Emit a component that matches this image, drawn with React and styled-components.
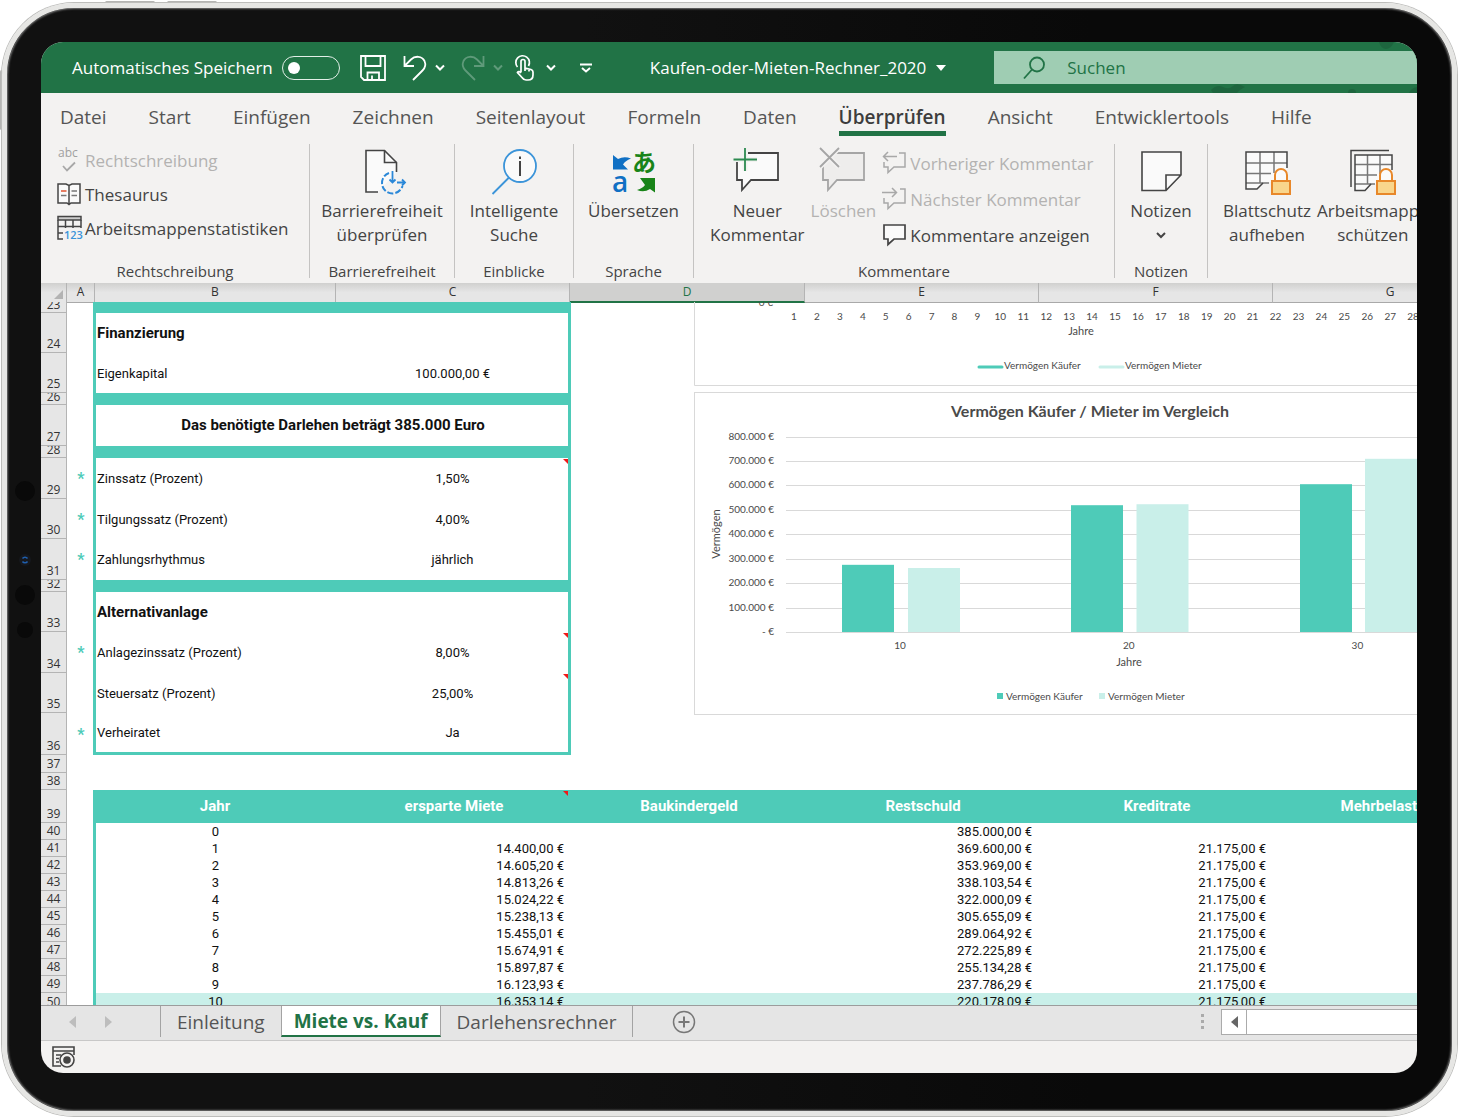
import React from "react";
import styled, { createGlobalStyle, css } from "styled-components";

const teal = "#4ecbb8";
const mint = "#c9efe9";
const green = "#217346";
const ui = '"Open Sans", "Noto Sans", sans-serif';

const GlobalStyle = createGlobalStyle`
  *, *::before, *::after { box-sizing: border-box; }
  body { margin: 0; background: #fff; font-family: ${ui}; color: #444; }
  button, input { font: inherit; color: inherit; }
  button { padding: 0; border: 0; background: none; cursor: pointer; }
  svg { display: block; flex: none; }
`;

/* ---------- device ---------- */

const Stage = styled.div`
  position: relative;
  padding: 3px 1px 1px 2px;
  overflow: hidden;
`;

const Device = styled.div`
  position: relative;
  padding: 34px 35px 38px 34px;
  border: 5px solid #e6e6e4;
  border-radius: 72px;
  background: linear-gradient(90deg, #111 0%, #111 40%, #090909 75%);
  box-shadow: inset 0 0 2px 1px #777, 0 0 0 1px #bdbdbb;
`;

const SideKey = styled.span`
  position: absolute;
  background: #b5b5b3;
  border-radius: 2px;
  ${(p) =>
    p.$edge === "top"
      ? css`top: 1px; left: ${p.$at}px; width: 50px; height: 3px;`
      : css`left: 0; top: ${p.$at}px; width: 3px; height: 60px;`}
`;

const Sensors = styled.svg`
  position: absolute;
  left: 8px;
  top: 472px;
`;

const Screen = styled.div`
  overflow: hidden;
  border-radius: 22px;
  background: #f3f2f1;
`;

/* ---------- title bar ---------- */

const TitleBar = styled.header`
  position: relative;
  display: flex;
  align-items: center;
  height: 51px;
  padding-left: 31px;
  background: ${green};
  color: #fff;
  font-size: 17px;
  line-height: 24px;
  white-space: nowrap;
`;

const AutoSave = styled.label`
  display: flex;
  align-items: center;
  gap: 9px;
  margin-right: 20px;
`;

const Toggle = styled.input`
  appearance: none;
  width: 58px;
  height: 24px;
  margin: 0;
  padding: 5px;
  border: 1px solid #e2efe7;
  border-radius: 12px;
  &::before {
    content: "";
    display: block;
    width: 12px;
    height: 12px;
    border-radius: 50%;
    background: #fff;
  }
`;

const QuickTools = styled.div`
  display: flex;
  align-items: center;
  gap: 8px;
`;

const ToolButton = styled.button`
  display: flex;
  margin-right: ${(p) => p.$after || 0}px;
  opacity: ${(p) => (p.disabled ? 0.28 : 1)};
`;

const FileName = styled.button`
  display: flex;
  align-items: center;
  gap: 10px;
  margin: 0 48px 0 58px;
`;

const SearchBox = styled.label`
  display: flex;
  flex: 1;
  align-items: center;
  gap: 22px;
  height: 33px;
  padding-left: 29px;
  background: #9fcdb3;
  color: ${green};
`;

const SearchInput = styled.input`
  flex: 1;
  min-width: 0;
  padding: 0;
  border: 0;
  outline: 0;
  background: none;
  &::placeholder { color: ${green}; opacity: 1; }
`;

const Splashes = styled.svg`
  position: absolute;
  right: 0;
  top: 0;
  pointer-events: none;
`;

/* ---------- ribbon ---------- */

const Tabs = styled.nav`
  display: flex;
  gap: 42px;
  padding: 10px 0 0 19px;
  font-size: 19px;
  line-height: 28px;
`;

const Tab = styled.button`
  border-bottom: 5px solid ${(p) => (p.$active ? green : "transparent")};
  color: ${(p) => (p.$active ? "#3d3d3d" : "#555")};
  font-weight: ${(p) => (p.$active ? 600 : 400)};
  white-space: nowrap;
`;

const Ribbon = styled.div`
  display: flex;
  padding: 8px 0 5px;
  overflow: hidden;
`;

const Group = styled.section`
  display: flex;
  flex: none;
  flex-direction: column;
  justify-content: space-between;
  height: 134px;
  width: ${(p) => p.$width}px;
  border-right: 1px solid #c4c3c2;
`;

const GroupBody = styled.div`
  display: flex;
  justify-content: ${(p) => (p.$start ? "flex-start" : "center")};
  gap: 6px;
  padding-left: ${(p) => p.$start || 0}px;
`;

const GroupLabel = styled.div`
  height: 14px;
  font-size: 15px;
  line-height: 14px;
  text-align: center;
`;

const BigButton = styled.button`
  display: flex;
  flex-direction: column;
  align-items: center;
  gap: 3px;
  padding-top: 4px;
  color: ${(p) => (p.disabled ? "#b3b2b1" : "#444")};
  font-size: 17px;
  line-height: 24px;
  white-space: nowrap;
`;

const BigIcon = styled.span`
  display: flex;
  justify-content: center;
  height: 48px;
`;

const List = styled.div`
  display: flex;
  flex-direction: column;
  padding-top: ${(p) => p.$top || 0}px;
`;

const ListButton = styled.button`
  display: flex;
  align-items: center;
  gap: 4px;
  height: ${(p) => p.$height}px;
  color: ${(p) => (p.disabled ? "#b3b2b1" : "#444")};
  font-size: 17px;
  line-height: 22px;
  white-space: nowrap;
`;

/* ---------- sheet ---------- */

const SheetView = styled.main`
  position: relative;
  overflow: hidden;
  background: #fff;
`;

const Sheet = styled.table`
  display: block;
  width: max-content;
  font-family: Roboto, sans-serif;
  font-size: 13px;
  color: #111;
`;

const HeadSection = styled.thead`display: block;`;
const BodySection = styled.tbody`display: block;`;

const ColumnRow = styled.tr`
  display: grid;
  grid-template-columns: 26px 28px 241px 234px 235px 234px 234px 235px;
  height: 19px;
  font-family: ${ui};
  background: linear-gradient(#d0d0cf, #e6e6e6 50%);
`;

const ColumnHead = styled.th`
  padding: 0;
  border-right: 1px solid #b4b4b4;
  border-bottom: ${(p) => (p.$selected ? `2px solid ${green}` : "1px solid #a9a9a9")};
  background: ${(p) => (p.$selected ? "#d0d0cf" : "transparent")};
  color: ${(p) => (p.$selected ? green : "#333")};
  font-size: 12px;
  font-weight: 400;
  line-height: 18px;
  text-align: center;
`;

const Corner = styled(ColumnHead)`
  display: flex;
  align-items: flex-end;
  justify-content: flex-end;
  padding: 0 3px 3px 0;
`;

const Row = styled.tr`
  display: grid;
  grid-template-columns: 26px 26px 242px 236px 234px 234px 234px 235px;
  height: ${(p) => p.$height}px;
`;

const RowHead = styled.th`
  display: flex;
  align-items: flex-end;
  justify-content: center;
  min-height: 0;
  padding: 0;
  overflow: hidden;
  border-right: 1px solid #b4b4b4;
  border-bottom: 1px solid #b4b4b4;
  background: #e6e6e6;
  color: #333;
  font-family: ${ui};
  font-size: 12px;
  font-weight: 400;
  line-height: ${(p) => (p.$tight ? 15 : 17)}px;
  ${(p) => p.$clipped && css`align-items: flex-start; border-bottom: 0;`}
`;

const Cell = styled.td`
  position: relative;
  display: flex;
  align-items: center;
  min-height: 0;
  padding: 0;
  line-height: 17px;
  white-space: nowrap;
  grid-column: span ${(p) => p.colSpan || 1};
  justify-content: ${(p) => ({ center: "center", right: "flex-end" }[p.$align] || "flex-start")};
  ${(p) => p.$align === "right" && css`padding-right: 7px;`}
  ${(p) => p.$fill && css`background: ${p.$fill};`}
  ${(p) => p.$bold && css`font-size: 15px; font-weight: 700;`}
  ${(p) => p.$left && css`border-left: 3px solid ${teal}; padding-left: ${p.$align ? 0 : 1}px;`}
  ${(p) => p.$right && css`border-right: 3px solid ${teal}; padding-left: 2px;`}
  ${(p) => p.$bottom && css`border-bottom: 3px solid ${teal};`}
  ${(p) => p.$title && css`padding-left: 2px; color: #fff; font-size: 15px; font-weight: 700;`}
  ${(p) => p.$clipped && css`align-items: flex-start;`}
`;

const Star = styled(Cell)`
  padding-left: 2px;
  color: ${teal};
  font-size: 16px;
  font-weight: 700;
`;

const NoteMark = styled.i`
  position: absolute;
  top: 1px;
  right: ${(p) => p.$right || 0}px;
  width: 5px;
  height: 5px;
  background: #f01818;
  clip-path: polygon(0 0, 100% 0, 100% 100%);
`;

const LineChart = styled.svg`
  position: absolute;
  left: 653px;
  top: 19px;
`;

const BarChart = styled.svg`
  position: absolute;
  left: 653px;
  top: 109px;
`;

/* ---------- bottom bars ---------- */

const SheetBar = styled.footer`
  display: flex;
  height: 36px;
  padding-left: 28px;
  border-top: 1px solid #9c9c9c;
  border-bottom: 1px solid #c8c8c8;
  background: #e5e5e5;
  font-size: 19px;
  line-height: 30px;
`;

const Arrows = styled.div`
  display: flex;
  align-items: center;
  gap: 29px;
  width: 91px;
  height: 32px;
`;

const ArrowButton = styled.button`display: flex;`;

const SheetTab = styled.button`
  height: 31px;
  padding: 0 16px;
  white-space: nowrap;
  color: #555;
  ${(p) => p.$line && css`border-${p.$line}: 1px solid #a3a3a3;`}
  ${(p) =>
    p.$active &&
    css`
      padding: 0 12px;
      border: 1px solid #a3a3a3;
      border-width: 0 1px;
      border-bottom: 2px solid ${green};
      background: #fff;
      color: ${green};
      font-weight: 700;
    `}
`;

const AddSheet = styled.button`
  display: flex;
  align-items: center;
  height: 32px;
  margin-left: 39px;
`;

const ScrollArea = styled.div`
  display: flex;
  align-items: center;
  width: 216px;
  height: 32px;
  margin-left: auto;
`;

const ScrollButton = styled.button`
  display: flex;
  align-items: center;
  justify-content: center;
  width: 26px;
  height: 26px;
  margin-left: 17px;
  border: 1px solid #ababab;
  background: #fff;
`;

const ScrollTrack = styled.div`
  flex: 1;
  height: 26px;
  border: 1px solid #ababab;
  border-width: 1px 0;
  background: #fff;
`;

const StatusBar = styled.div`
  display: flex;
  align-items: center;
  height: 32px;
  padding-left: 11px;
`;

/* ---------- icons ---------- */

const Icon = ({ w, h, children, ...rest }) => (
  <svg width={w} height={h} viewBox={`0 0 ${w} ${h}`} fill="none" overflow="visible" aria-hidden="true" {...rest}>
    {children}
  </svg>
);

const Chevron = ({ color = "#fff" }) => (
  <Icon w={10} h={8} stroke={color} strokeWidth="2"><path d="M1 1.5l4 4 4-4" /></Icon>
);

const SaveIcon = () => (
  <Icon w={26} h={26} stroke="#fff" strokeWidth="1.8">
    <path d="M1 1H25V25H4L1 22Z M5.500 1V11H20.500V1 M7.500 25V17.500H19V25 M12 25V20.500" />
  </Icon>
);

const UndoIcon = () => (
  <Icon w={24} h={26} stroke="#fff" strokeWidth="1.800">
    <path d="M1.500 1V11H11 M1.500 11L8 4.500C12 .5 19 .8 21.500 6C23.200 10 22 13 19.500 15.500L10 25" />
  </Icon>
);

const RedoIcon = () => (
  <Icon w={24} h={26} stroke="#fff" strokeWidth="1.800">
    <path d="M22.500 1V11H13 M22.500 11L16 4.500C12 .5 5 .8 2.500 6C.8 10 2 13 4.500 15.500L14 25" />
  </Icon>
);

const TouchIcon = () => (
  <Icon w={19} h={26} stroke="#fff" strokeWidth="1.700">
    <path d="M2.500 12A6.800 6.800 0 1 1 13.500 11" />
    <path d="M6 17V6.500a2 2 0 0 1 4 0V13l6 1.500c1.500.5 2 1.200 2 2.500v3c0 3-2 5-5 5h-2c-2 0-3-1-4-2.500L2.500 17.500c.8-1.500 2.500-1 3.500.5M10 13v3M14 14v2.500" />
  </Icon>
);

const CustomizeIcon = () => (
  <Icon w={12} h={10} stroke="#fff" strokeWidth="2"><path d="M0 1.500h12M2 5l4 3.500L10 5" /></Icon>
);

const SearchIcon = () => (
  <Icon w={22} h={24} stroke={green} strokeWidth="1.800"><circle cx="14" cy="8.500" r="7" /><path d="M9 13.500L1 22.500" /></Icon>
);

const SpellIcon = () => (
  <Icon w={24} h={28} stroke="#a8a8a8">
    <text x="1" y="10" fontFamily="Open Sans" fontSize="12" fill="#a0a0a0" stroke="none">abc</text>
    <path d="M6 19l4 4.500 8-8" strokeWidth="1.800" />
  </Icon>
);

const BookIcon = () => (
  <Icon w={24} h={24} stroke="#444" strokeWidth="1.500">
    <path d="M1 1H9L12 2.500L15 1H23V20H14L12 21.500L10 20H1Z M12 2.500V21" fill="#fafafa" />
    <path d="M14.500 8H20M14.500 12.500H20M4 12.500H9.500" stroke="#777" />
    <path d="M4 8H9.500" stroke="#e0532f" />
  </Icon>
);

const StatsIcon = () => (
  <Icon w={24} h={26} stroke="#444" strokeWidth="1.500">
    <path d="M1 .5H24V4H1Z" fill="#ccc" />
    <path d="M1 4V23H6 M1 10.500H24 M1 17H6 M8.500 4V12 M16 4V12 M24 4V12" />
    <text x="7" y="23" fontFamily="Open Sans" fontWeight="600" fontSize="11" fill="#3b94d9" stroke="none">123</text>
  </Icon>
);

const AccessIcon = () => (
  <Icon w={40} h={48} stroke="#444" strokeWidth="1.600">
    <path d="M16 44H4V2.500H22.500L34.500 14.500V24" fill="#fafafa" />
    <path d="M22.500 2.500V14.500H34.500" />
    <path d="M27 25A10.500 10.500 0 1 0 40.500 38" stroke="#2b88d8" strokeWidth="2" strokeDasharray="6 2" />
    <path d="M30.500 23V34M27.500 31.500l3 3 3-3M35 34.500H43M40 31.500l3 3-3 3" stroke="#2b88d8" strokeWidth="1.800" />
  </Icon>
);

const LookupIcon = () => (
  <Icon w={46} h={48} stroke="#3b94d9" strokeWidth="1.800">
    <circle cx="29" cy="18" r="16" fill="#fafafa" />
    <path d="M18 29.500L1.500 46" />
    <path d="M29 13V28" stroke="#444" strokeWidth="2" /><path d="M29 8.500V11" stroke="#444" strokeWidth="2" />
  </Icon>
);

const TranslateIcon = () => (
  <Icon w={46} h={48}>
    <path d="M2 7L7 11Q13 8 20 10.500Q14 13 12 16.500L17 21.500H2Z" fill="#1070c4" />
    <text x="1" y="44" fontFamily="Open Sans" fontWeight="600" fontSize="28" fill="#1070c4">a</text>
    <text x="21" y="23" fontFamily="Noto Sans CJK JP" fontWeight="700" fontSize="24" fill="#188418">あ</text>
    <path d="M44 30V44.500L39 41Q33 45 26 42Q32 40 34 37L29 30Z" fill="#188418" />
  </Icon>
);

const bubble = "M15 5H45V32H18L9 42V32H4V14";

const NewCommentIcon = () => (
  <Icon w={48} h={48} stroke="#444" strokeWidth="1.800">
    <path d={bubble} fill="#fafafa" />
    <path d="M12 0V23M.5 11.500H24" stroke="#f3f2f1" strokeWidth="5" />
    <path d="M12 0V23M.5 11.500H24" stroke="#2c8a50" />
  </Icon>
);

const DeleteIcon = () => (
  <Icon w={48} h={48} stroke="#a5a5a5" strokeWidth="1.800">
    <path d={bubble} fill="#eeedec" />
    <path d="M1 0L20 19M20 0L1 19" stroke="#f3f2f1" strokeWidth="5" />
    <path d="M1 0L20 19M20 0L1 19" />
  </Icon>
);

const PrevIcon = () => (
  <Icon w={24} h={24} stroke="#a8a8a8" strokeWidth="1.500">
    <path d="M17 1H23V15H12L6 20.500V15H2V10" />
    <path d="M15 4.500H1.500M6 0L1.500 4.500L6 9" />
  </Icon>
);

const NextIcon = () => (
  <Icon w={24} h={24} stroke="#a8a8a8" strokeWidth="1.500">
    <path d="M18 1H23V15H12L6 20.500V15H2V10" />
    <path d="M0 4.500H14.500M10 0L14.500 4.500L10 9" />
  </Icon>
);

const ShowIcon = () => (
  <Icon w={24} h={24} stroke="#444" strokeWidth="1.700">
    <path d="M2 1H23V15H12L6 20.500V15H2Z" fill="#fafafa" />
  </Icon>
);

const NotesIcon = () => (
  <Icon w={42} h={48} stroke="#444" strokeWidth="1.600">
    <path d="M2 4H41V27L26 42.500H2Z M26 42.500V27H41" fill="#fafafa" />
  </Icon>
);

const Lock = ({ x, y }) => (
  <g transform={`translate(${x} ${y})`} stroke="#e8882a" strokeWidth="2">
    <path d="M4 13V7a6 6 0 0 1 12 0V13" fill="#fafafa" />
    <path d="M1 13H19V26H1Z" fill="#f9d68c" />
  </g>
);

const SheetLockIcon = () => (
  <Icon w={48} h={48} stroke="#444" strokeWidth="1.500">
    <path d="M3 4H44V34H20L14 41H3Z" fill="#fafafa" stroke="none" />
    <path d="M3 15H44M3 25.500H28M3 35H26M17 4V35M31 4V25" stroke="#777" />
    <path d="M44 20V4H3V41H14L20 35" />
    <Lock x={28} y={20} />
  </Icon>
);

const BookLockIcon = () => (
  <Icon w={48} h={48} stroke="#444" strokeWidth="1.500">
    <path d="M2 39V2.500H40" />
    <path d="M6 7H43V36H22L16 42.500H6Z" fill="#fafafa" stroke="none" />
    <path d="M6 16.500H43M6 27H28M6 36H26M18.500 7V36M31 7V26" stroke="#777" />
    <path d="M43 22V7H6V42.500H16L22 36" />
    <Lock x={27} y={20} />
  </Icon>
);

const Triangle = ({ dir, color }) => (
  <Icon w={7} h={12}><path d={dir === "left" ? "M7 0V12L0 6Z" : "M0 0V12L7 6Z"} fill={color} /></Icon>
);

const MacroIcon = () => (
  <Icon w={23} h={22} stroke="#444" strokeWidth="1.600">
    <path d="M9 20H1V1H22V9M1 5H22" /><path d="M4 9H9M4 12.500H7M4 16H7" strokeWidth="1.300" />
    <circle cx="15" cy="14" r="7" fill="#f3f2f1" /><circle cx="15" cy="14" r="3" fill="#444" />
  </Icon>
);

/* ---------- data ---------- */

const tabs = ["Datei", "Start", "Einfügen", "Zeichnen", "Seitenlayout", "Formeln", "Daten", "Überprüfen", "Ansicht", "Entwicklertools", "Hilfe"];

const form = [
  { n: 23, h: 11, band: true },
  { n: 24, h: 40, label: "Finanzierung", bold: true },
  { n: 25, h: 40, label: "Eigenkapital", value: "100.000,00 €" },
  { n: 26, h: 12, band: true },
  { n: 27, h: 41, wide: "Das benötigte Darlehen beträgt 385.000 Euro" },
  { n: 28, h: 12, band: true },
  { n: 29, h: 41, label: "Zinssatz (Prozent)", value: "1,50%", star: true, note: true },
  { n: 30, h: 40, label: "Tilgungssatz (Prozent)", value: "4,00%", star: true },
  { n: 31, h: 41, label: "Zahlungsrhythmus", value: "jährlich", star: true },
  { n: 32, h: 12, band: true },
  { n: 33, h: 40, label: "Alternativanlage", bold: true },
  { n: 34, h: 41, label: "Anlagezinssatz (Prozent)", value: "8,00%", star: true, note: true },
  { n: 35, h: 40, label: "Steuersatz (Prozent)", value: "25,00%", note: true },
  { n: 36, h: 42, label: "Verheiratet", value: "Ja", star: true, last: true },
];

const headings = ["Jahr", "ersparte Miete", "Baukindergeld", "Restschuld", "Kreditrate", "Mehrbelastung"];

const years = [
  ["", "385.000,00 €", ""],
  ["14.400,00 €", "369.600,00 €", "21.175,00 €"],
  ["14.605,20 €", "353.969,00 €", "21.175,00 €"],
  ["14.813,26 €", "338.103,54 €", "21.175,00 €"],
  ["15.024,22 €", "322.000,09 €", "21.175,00 €"],
  ["15.238,13 €", "305.655,09 €", "21.175,00 €"],
  ["15.455,01 €", "289.064,92 €", "21.175,00 €"],
  ["15.674,91 €", "272.225,89 €", "21.175,00 €"],
  ["15.897,87 €", "255.134,28 €", "21.175,00 €"],
  ["16.123,93 €", "237.786,29 €", "21.175,00 €"],
  ["16.353,14 €", "220.178,09 €", "21.175,00 €"],
];

const bars = [
  { year: 10, buyer: 275, tenant: 262 },
  { year: 20, buyer: 519, tenant: 523 },
  { year: 30, buyer: 605, tenant: 709 },
];

/* ---------- charts ---------- */

const chartText = { fontFamily: "Lato, Carlito, sans-serif", fontSize: 10, fill: "#4a4a4a" };

function WealthLine() {
  return (
    <LineChart width="793" height="84" {...chartText}>
      <path d="M.5 0V83.500H792.500V0" fill="none" stroke="#d9d9d9" />
      <text x="79" y="4" textAnchor="end">0 €</text>
      {Array.from({ length: 30 }, (_, i) => (
        <text key={i} x={100 + i * 22.93} y="18" textAnchor="middle">{i + 1}</text>
      ))}
      <text x="387" y="33" textAnchor="middle" fontSize="11">Jahre</text>
      <path d="M285 65H308" stroke={teal} strokeWidth="3" strokeLinecap="round" />
      <text x="310" y="67">Vermögen Käufer</text>
      <path d="M406 65H429" stroke={mint} strokeWidth="3" strokeLinecap="round" />
      <text x="431" y="67">Vermögen Mieter</text>
    </LineChart>
  );
}

function WealthBars() {
  const base = 240;
  const y = (v) => base - v * 0.2443;
  return (
    <BarChart width="793" height="323" {...chartText}>
      <rect x=".5" y=".5" width="792" height="322" fill="#fff" stroke="#d9d9d9" />
      <text x="396" y="25" textAnchor="middle" fontSize="16" fontWeight="700">Vermögen Käufer / Mieter im Vergleich</text>
      {[800, 700, 600, 500, 400, 300, 200, 100, 0].map((v) => (
        <g key={v}>
          <path d={`M92 ${Math.round(y(v)) + 0.5}H778`} stroke="#d9d9d9" />
          <text x="80" y={y(v) + 3} textAnchor="end">{v ? `${v}.000 €` : "- €"}</text>
        </g>
      ))}
      {bars.map((b, i) => (
        <g key={b.year}>
          <rect x={148 + i * 229} y={y(b.buyer)} width="52" height={base - y(b.buyer)} fill={teal} />
          <rect x={214 + i * 228.5} y={y(b.tenant)} width="52" height={base - y(b.tenant)} fill={mint} />
          <text x={206 + i * 228.7} y="257" textAnchor="middle">{b.year}</text>
        </g>
      ))}
      <text transform="translate(26 142) rotate(-90)" textAnchor="middle" fontSize="11">Vermögen</text>
      <text x="435" y="274" textAnchor="middle" fontSize="11">Jahre</text>
      <rect x="303" y="301" width="6" height="6" fill={teal} />
      <text x="312" y="308">Vermögen Käufer</text>
      <rect x="405" y="301" width="6" height="6" fill={mint} />
      <text x="414" y="308">Vermögen Mieter</text>
    </BarChart>
  );
}

/* ---------- parts ---------- */

const Big = ({ icon, lines, ...rest }) => (
  <BigButton {...rest}>
    <BigIcon>{icon}</BigIcon>
    <span>{lines[0]}{lines[1] && <><br />{lines[1]}</>}</span>
  </BigButton>
);

function FormRow({ row }) {
  const { n, h, band, label, bold, value, wide, star, note, last } = row;
  return (
    <Row $height={h}>
      <RowHead scope="row" $tight={h < 20}>{n}</RowHead>
      <Star $align="center">{star ? "*" : ""}</Star>
      {band && <Cell colSpan={2} $fill={teal} />}
      {wide && <Cell colSpan={2} $left $right $bold $align="center">{wide}</Cell>}
      {label && <Cell $left $bold={bold} $bottom={last}>{label}</Cell>}
      {label && (
        <Cell $right $align="center" $bottom={last}>
          {value}
          {note && <NoteMark />}
        </Cell>
      )}
    </Row>
  );
}

export default function App() {
  return (
    <Stage>
      <GlobalStyle />
      <SideKey $edge="top" $at={105} />
      <SideKey $edge="top" $at={167} />
      <SideKey $edge="left" $at={70} />
      <Device>
        <Sensors width="20" height="160" aria-hidden="true">
          <circle cx="10" cy="11" r="10" fill="#090909" />
          <circle cx="10" cy="80" r="6" fill="#16181d" />
          <path d="M7.500 78.500a3 3 0 0 1 5 0M7.500 81.500a3 3 0 0 0 5 0" stroke="#1f5fae" strokeWidth="1.500" fill="none" />
          <circle cx="10" cy="115" r="10" fill="#090909" />
          <circle cx="10" cy="150" r="8" fill="#090909" />
        </Sensors>
        <Screen>
          <TitleBar>
            <AutoSave>
              Automatisches Speichern
              <Toggle type="checkbox" role="switch" />
            </AutoSave>
            <QuickTools>
              <ToolButton aria-label="Speichern" $after={9}><SaveIcon /></ToolButton>
              <ToolButton aria-label="Rückgängig"><UndoIcon /></ToolButton>
              <ToolButton aria-label="Rückgängig-Liste" $after={8}><Chevron /></ToolButton>
              <ToolButton aria-label="Wiederholen" disabled><RedoIcon /></ToolButton>
              <ToolButton aria-label="Wiederholen-Liste" disabled $after={4}><Chevron /></ToolButton>
              <ToolButton aria-label="Touchmodus" $after={4}><TouchIcon /></ToolButton>
              <ToolButton aria-label="Touchmodus-Liste" $after={16}><Chevron /></ToolButton>
              <ToolButton aria-label="Symbolleiste anpassen"><CustomizeIcon /></ToolButton>
            </QuickTools>
            <FileName>
              Kaufen-oder-Mieten-Rechner_2020
              <Icon w={10} h={6}><path d="M0 0H10L5 6Z" fill="#fff" /></Icon>
            </FileName>
            <SearchBox>
              <SearchIcon />
              <SearchInput type="search" placeholder="Suchen" aria-label="Suchen" />
            </SearchBox>
            <Splashes width="210" height="51" fill="#1c5f3b" aria-hidden="true">
              <path d="M172 0h15q-3 7-8 7t-7-7zM4 48q6-6 12-3t10-1 12 1q-6 3-8 6H6zM141 51q0-4 4-4t4 4zM202 51q2-5 8-6v6z" opacity=".7" />
            </Splashes>
          </TitleBar>

          <Tabs>
            {tabs.map((t) => <Tab key={t} $active={t === "Überprüfen"}>{t}</Tab>)}
          </Tabs>

          <Ribbon>
            <Group $width={269}>
              <GroupBody $start={16}>
                <List>
                  <ListButton $height={34} disabled><SpellIcon />Rechtschreibung</ListButton>
                  <ListButton $height={34}><BookIcon />Thesaurus</ListButton>
                  <ListButton $height={34}><StatsIcon />Arbeitsmappenstatistiken</ListButton>
                </List>
              </GroupBody>
              <GroupLabel>Rechtschreibung</GroupLabel>
            </Group>
            <Group $width={145}>
              <GroupBody><Big icon={<AccessIcon />} lines={["Barrierefreiheit", "überprüfen"]} /></GroupBody>
              <GroupLabel>Barrierefreiheit</GroupLabel>
            </Group>
            <Group $width={119}>
              <GroupBody><Big icon={<LookupIcon />} lines={["Intelligente", "Suche"]} /></GroupBody>
              <GroupLabel>Einblicke</GroupLabel>
            </Group>
            <Group $width={120}>
              <GroupBody><Big icon={<TranslateIcon />} lines={["Übersetzen"]} /></GroupBody>
              <GroupLabel>Sprache</GroupLabel>
            </Group>
            <Group $width={421}>
              <GroupBody $start={16}>
                <Big icon={<NewCommentIcon />} lines={["Neuer", "Kommentar"]} />
                <Big icon={<DeleteIcon />} lines={["Löschen"]} disabled />
                <List $top={2}>
                  <ListButton $height={36} disabled><PrevIcon />Vorheriger Kommentar</ListButton>
                  <ListButton $height={36} disabled><NextIcon />Nächster Kommentar</ListButton>
                  <ListButton $height={36}><ShowIcon />Kommentare anzeigen</ListButton>
                </List>
              </GroupBody>
              <GroupLabel>Kommentare</GroupLabel>
            </Group>
            <Group $width={93}>
              <GroupBody>
                <BigButton>
                  <BigIcon><NotesIcon /></BigIcon>
                  Notizen
                  <Icon w={10} h={20} stroke="#444" strokeWidth="2"><path d="M1 7l4 4 4-4" /></Icon>
                </BigButton>
              </GroupBody>
              <GroupLabel>Notizen</GroupLabel>
            </Group>
            <Group $width={240}>
              <GroupBody $start={15}>
                <Big icon={<SheetLockIcon />} lines={["Blattschutz", "aufheben"]} />
                <Big icon={<BookLockIcon />} lines={["Arbeitsmappe", "schützen"]} />
              </GroupBody>
            </Group>
          </Ribbon>

          <SheetView>
            <Sheet cellSpacing="0">
              <HeadSection>
                <ColumnRow>
                  <Corner as="td"><Icon w={9} h={9}><path d="M9 0V9H0Z" fill="#b3b3b3" /></Icon></Corner>
                  {["A", "B", "C", "D", "E", "F", "G"].map((c) => (
                    <ColumnHead key={c} scope="col" $selected={c === "D"}>{c}</ColumnHead>
                  ))}
                </ColumnRow>
              </HeadSection>
              <BodySection>
                {form.map((row) => <FormRow key={row.n} row={row} />)}
                <Row $height={18}><RowHead scope="row">37</RowHead></Row>
                <Row $height={17}><RowHead scope="row">38</RowHead></Row>
                <Row $height={33}>
                  <RowHead scope="row">39</RowHead>
                  <Cell />
                  {headings.map((t) => (
                    <Cell key={t} $title $align="center" $fill={teal}>
                      {t}
                      {t === "ersparte Miete" && <NoteMark $right={3} />}
                    </Cell>
                  ))}
                </Row>
                {years.map(([rent, debt, rate], i) => {
                  const clipped = i === 10;
                  const common = { $clipped: clipped, $fill: clipped ? mint : undefined };
                  return (
                    <Row key={i} $height={clipped ? 12 : 17}>
                      <RowHead scope="row" $clipped={clipped}>{40 + i}</RowHead>
                      <Cell />
                      <Cell $left $align="center" {...common}>{i}</Cell>
                      <Cell $align="right" {...common}>{rent}</Cell>
                      <Cell {...common} />
                      <Cell $align="right" {...common}>{debt}</Cell>
                      <Cell $align="right" {...common}>{rate}</Cell>
                      <Cell {...common} />
                    </Row>
                  );
                })}
              </BodySection>
            </Sheet>
            <WealthLine />
            <WealthBars />
          </SheetView>

          <SheetBar>
            <Arrows>
              <ArrowButton aria-label="Vorheriges Blatt"><Triangle dir="left" color="#bdbdbd" /></ArrowButton>
              <ArrowButton aria-label="Nächstes Blatt"><Triangle dir="right" color="#bdbdbd" /></ArrowButton>
            </Arrows>
            <SheetTab $line="left">Einleitung</SheetTab>
            <SheetTab $active>Miete vs. Kauf</SheetTab>
            <SheetTab $line="right">Darlehensrechner</SheetTab>
            <AddSheet aria-label="Neues Blatt">
              <Icon w={24} h={24} stroke="#777" strokeWidth="1.500"><circle cx="12" cy="12" r="10.500" /><path d="M12 6.500V17.500M6.500 12H17.500" strokeWidth="2" /></Icon>
            </AddSheet>
            <ScrollArea>
              <Icon w={3} h={16}><path fill="#aaa" d="M0 0h3v3H0zM0 6h3v3H0zM0 12h3v3H0z" /></Icon>
              <ScrollButton aria-label="Nach links"><Triangle dir="left" color="#666" /></ScrollButton>
              <ScrollTrack />
            </ScrollArea>
          </SheetBar>
          <StatusBar><MacroIcon /></StatusBar>
        </Screen>
      </Device>
    </Stage>
  );
}
